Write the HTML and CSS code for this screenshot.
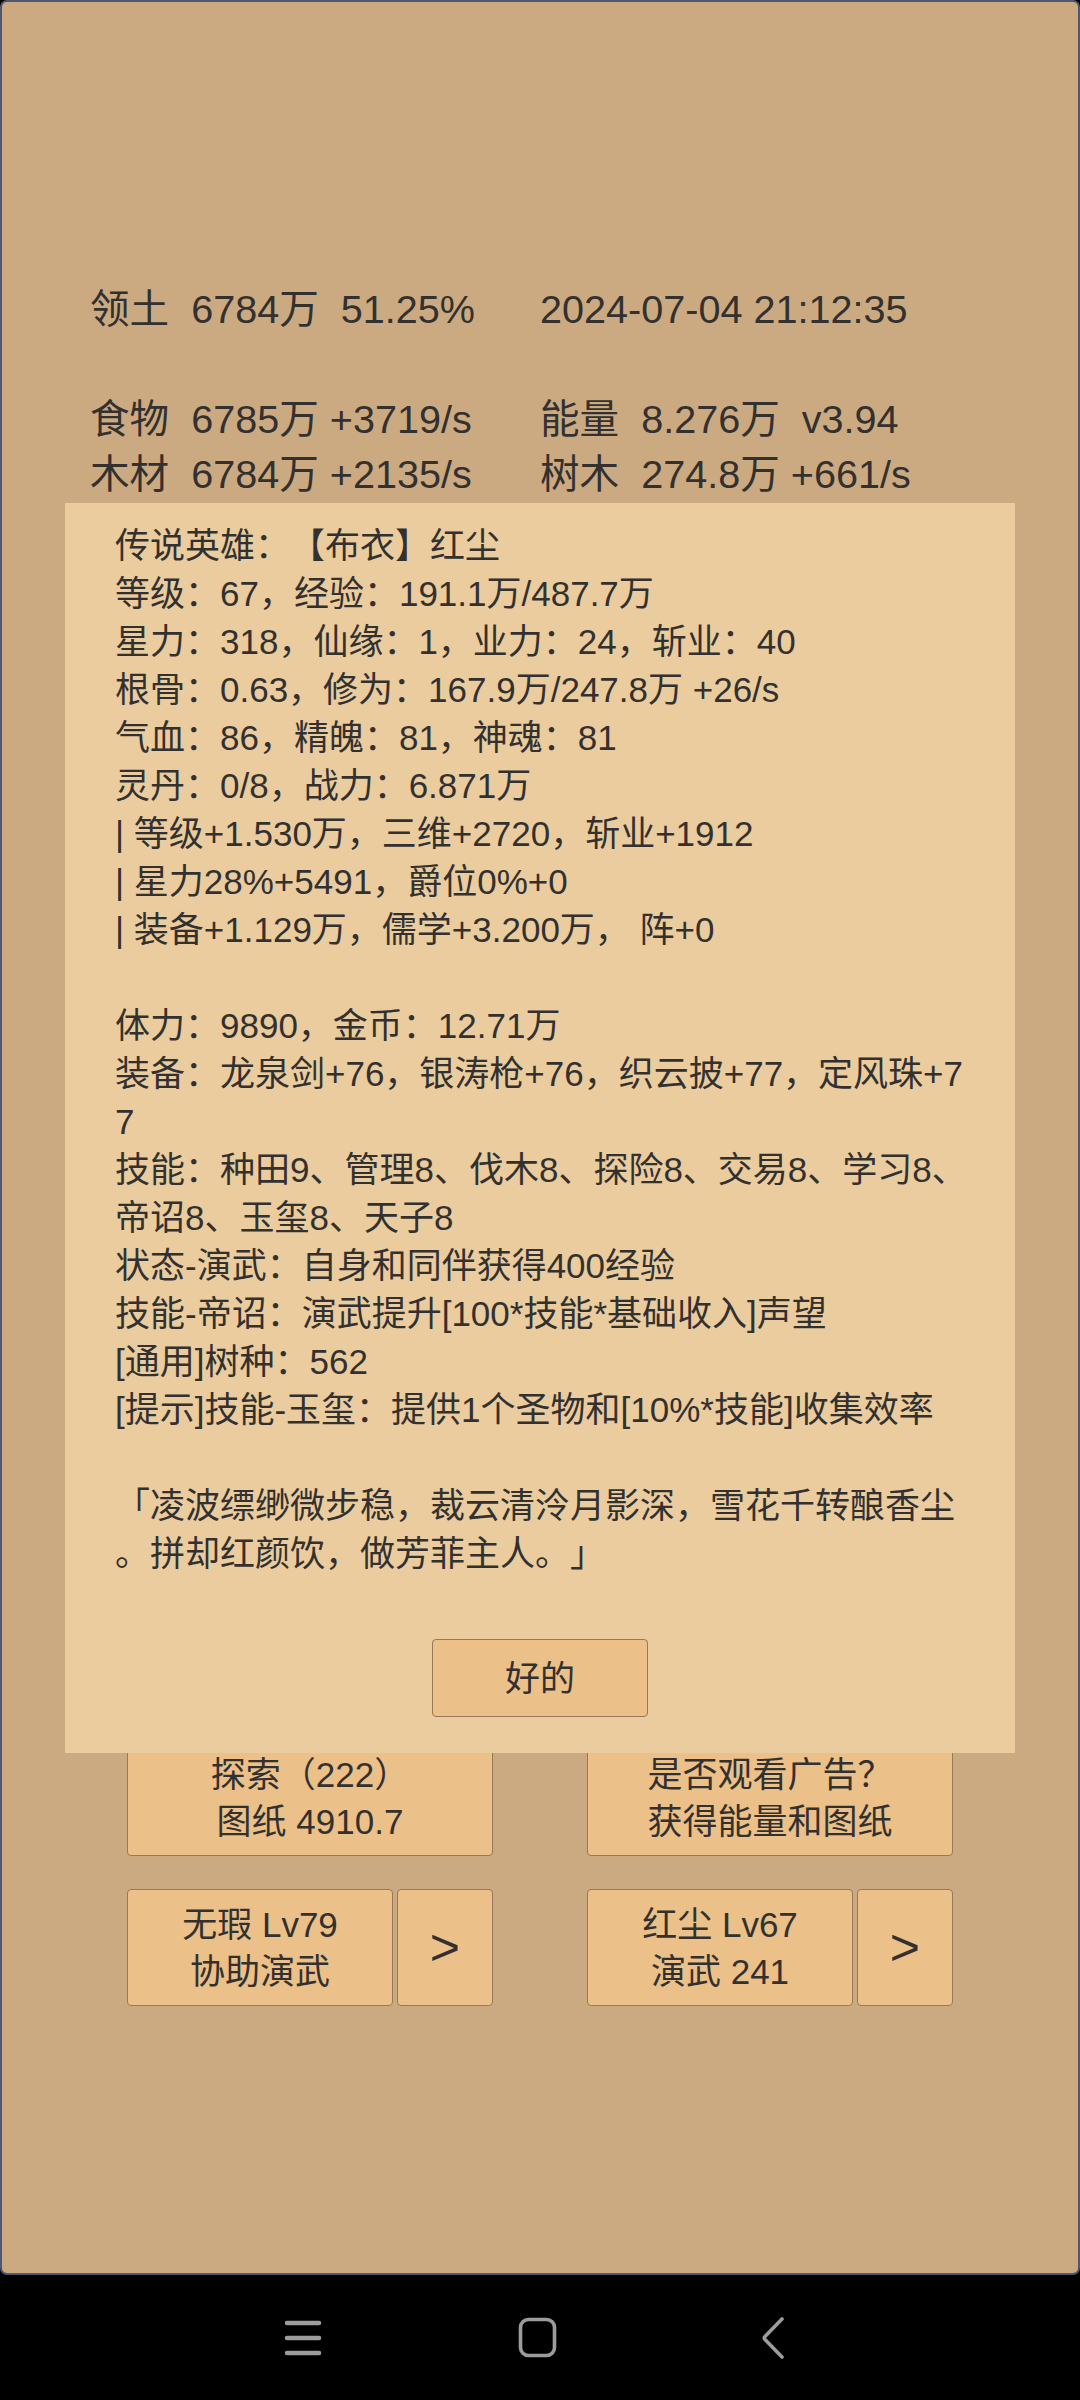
FILE: index.html
```html
<!DOCTYPE html>
<html lang="zh-CN">
<head>
<meta charset="utf-8">
<title>Game</title>
<link rel="stylesheet" href="styles.css">
</head>
<body>
<div class="screen">
  <div class="app">
    <div class="stats">
      <div class="row"><span>领土  6784万  51.25%</span><span>2024-07-04 21:12:35</span></div>
      <div class="row"></div>
      <div class="row"><span>食物  6785万 +3719/s</span><span>能量  8.276万  v3.94</span></div>
      <div class="row"><span>木材  6784万 +2135/s</span><span>树木  274.8万 +661/s</span></div>
    </div>

    <div class="actions">
      <div class="action-row">
        <div class="btn tall">探索（222）<br>图纸 4910.7</div>
        <div class="btn tall">是否观看广告？<br>获得能量和图纸</div>
      </div>
      <div class="action-row">
        <div class="pair">
          <div class="btn main">无瑕 Lv79<br>协助演武</div>
          <div class="btn arrow">&gt;</div>
        </div>
        <div class="pair">
          <div class="btn main">红尘 Lv67<br>演武 241</div>
          <div class="btn arrow">&gt;</div>
        </div>
      </div>
    </div>

    <div class="dialog">
      <div class="dialog-text">
        <p>传说英雄：【布衣】红尘<br>等级：67，经验：191.1万/487.7万<br>星力：318，仙缘：1，业力：24，斩业：40<br>根骨：0.63，修为：167.9万/247.8万 +26/s<br>气血：86，精魄：81，神魂：81<br>灵丹：0/8，战力：6.871万<br>| 等级+1.530万，三维+2720，斩业+1912<br>| 星力28%+5491，爵位0%+0<br>| 装备+1.129万，儒学+3.200万， 阵+0</p>
        <p>体力：9890，金币：12.71万<br>装备：龙泉剑+76，银涛枪+76，织云披+77，定风珠+7<br>7<br>技能：种田9、管理8、伐木8、探险8、交易8、学习8、<br>帝诏8、玉玺8、天子8<br>状态-演武：自身和同伴获得400经验<br>技能-帝诏：演武提升[100*技能*基础收入]声望<br>[通用]树种：562<br>[提示]技能-玉玺：提供1个圣物和[10%*技能]收集效率</p>
        <p>「凌波缥缈微步稳，裁云清泠月影深，雪花千转酿香尘<br>。拼却红颜饮，做芳菲主人。」</p>
      </div>
      <div class="dialog-actions">
        <div class="btn ok">好的</div>
      </div>
    </div>
  </div>

  <nav class="navbar">
    <div class="nav-item">
      <svg width="38" height="38" viewBox="0 0 38 38"><g stroke="#9c9c9c" stroke-width="4.5" stroke-linecap="round"><line x1="3" y1="4" x2="35" y2="4"/><line x1="3" y1="19" x2="35" y2="19"/><line x1="3" y1="34" x2="35" y2="34"/></g></svg>
    </div>
    <div class="nav-item">
      <svg width="42" height="42" viewBox="0 0 42 42"><rect x="3.5" y="2.5" width="34" height="36" rx="8" ry="8" fill="none" stroke="#9c9c9c" stroke-width="3.6"/></svg>
    </div>
    <div class="nav-item">
      <svg width="28" height="42" viewBox="0 0 28 42"><path d="M23 2 L6 19.5 Q4.5 21 6 22.5 L23 40" fill="none" stroke="#9c9c9c" stroke-width="3.6" stroke-linecap="round" stroke-linejoin="round"/></svg>
    </div>
  </nav>
</div>
</body>
</html>
```

FILE: styles.css
```css
* { box-sizing: border-box; }

html, body {
  margin: 0;
  padding: 0;
  background: #000;
}

body {
  width: 1080px;
  height: 2400px;
  overflow: hidden;
  font-family: "Liberation Sans", "Noto Sans CJK SC", sans-serif;
  color: #333130;
  text-spacing-trim: space-all;
}

.screen {
  width: 1080px;
  height: 2400px;
  display: flex;
  flex-direction: column;
}

.app {
  position: relative;
  height: 2275px;
  background: #cbaa82;
  border: 2px solid #4c5874;
  border-radius: 7px;
}

/* top statistics */
.stats {
  padding: 280px 0 0 88px;
  font-size: 39.6px;
}

.row {
  display: grid;
  grid-template-columns: 450px auto;
  height: 55px;
  line-height: 55px;
  white-space: pre;
}

/* action buttons */
.actions {
  margin-top: 1237px;
  padding: 0 125px;
  display: flex;
  flex-direction: column;
  gap: 33px;
}

.action-row {
  display: grid;
  grid-template-columns: 366px 366px;
  column-gap: 94px;
}

.pair {
  display: flex;
  gap: 4px;
}

.btn {
  background: #ebc089;
  border: 1.5px solid #97795a;
  border-radius: 4px;
  font-size: 35px;
  line-height: 47px;
  text-align: center;
  display: flex;
  align-items: center;
  justify-content: center;
  white-space: nowrap;
}

.tall {
  height: 117px;
}

.main {
  width: 266px;
  height: 117px;
}

.arrow {
  width: 96px;
  height: 117px;
  font-size: 52px;
}

/* modal dialog */
.dialog {
  position: absolute;
  left: 63px;
  top: 501px;
  width: 950px;
  background: #eacc9f;
  padding: 19px 50px 36px 50px;
}

.dialog-text {
  font-size: 35px;
  line-height: 48px;
  white-space: nowrap;
}

.dialog-text p {
  margin: 0 0 48px 0;
}

.dialog-text p:last-child {
  margin-bottom: 0;
}

.dialog-actions {
  margin-top: 61px;
  display: flex;
  justify-content: center;
}

.ok {
  width: 216px;
  height: 78px;
}

/* system navigation bar */
.navbar {
  height: 125px;
  background: #000;
  display: flex;
  align-items: center;
  justify-content: center;
  gap: 175px;
  padding-right: 5px;
}

.nav-item {
  width: 60px;
  height: 60px;
  display: flex;
  align-items: center;
  justify-content: center;
}
```
